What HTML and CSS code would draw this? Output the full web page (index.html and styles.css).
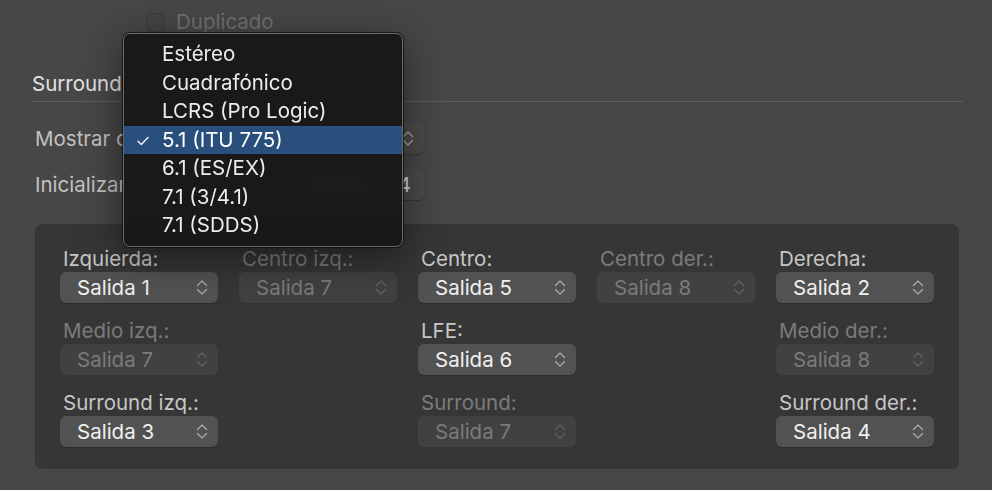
FILE: index.html
```html
<!DOCTYPE html>
<html lang="es">
<head>
<meta charset="utf-8">
<title>Surround</title>
<link rel="stylesheet" href="styles.css">
</head>
<body>
<div class="pane">
  <div class="dup">
    <span class="checkbox"></span>
    <span class="dup-label">Duplicado</span>
  </div>

  <div class="section-title">Surround</div>
  <div class="separator"></div>

  <div class="form-row first">
    <span class="form-label">Mostrar como:</span>
    <div class="popup wide">
      <span class="popup-text"></span>
      <svg class="chev" viewBox="0 0 12 19"><path d="M1.5 7.5 L6 3 L10.5 7.5 M1.5 11.5 L6 16 L10.5 11.5"/></svg>
    </div>
  </div>

  <div class="form-row second">
    <span class="form-label">Inicializar:</span>
    <div class="push wide">
      <span class="push-text">Salidas 1–4</span>
    </div>
  </div>

  <div class="box">
    <div class="grid">
      <div class="cell">
        <div class="lbl">Izquierda:</div>
        <div class="popup"><span class="popup-text">Salida 1</span><svg class="chev" viewBox="0 0 12 19"><path d="M1.5 7.5 L6 3 L10.5 7.5 M1.5 11.5 L6 16 L10.5 11.5"/></svg></div>
      </div>
      <div class="cell off">
        <div class="lbl">Centro izq.:</div>
        <div class="popup"><span class="popup-text">Salida 7</span><svg class="chev" viewBox="0 0 12 19"><path d="M1.5 7.5 L6 3 L10.5 7.5 M1.5 11.5 L6 16 L10.5 11.5"/></svg></div>
      </div>
      <div class="cell">
        <div class="lbl">Centro:</div>
        <div class="popup"><span class="popup-text">Salida 5</span><svg class="chev" viewBox="0 0 12 19"><path d="M1.5 7.5 L6 3 L10.5 7.5 M1.5 11.5 L6 16 L10.5 11.5"/></svg></div>
      </div>
      <div class="cell off">
        <div class="lbl">Centro der.:</div>
        <div class="popup"><span class="popup-text">Salida 8</span><svg class="chev" viewBox="0 0 12 19"><path d="M1.5 7.5 L6 3 L10.5 7.5 M1.5 11.5 L6 16 L10.5 11.5"/></svg></div>
      </div>
      <div class="cell">
        <div class="lbl">Derecha:</div>
        <div class="popup"><span class="popup-text">Salida 2</span><svg class="chev" viewBox="0 0 12 19"><path d="M1.5 7.5 L6 3 L10.5 7.5 M1.5 11.5 L6 16 L10.5 11.5"/></svg></div>
      </div>

      <div class="cell off">
        <div class="lbl">Medio izq.:</div>
        <div class="popup"><span class="popup-text">Salida 7</span><svg class="chev" viewBox="0 0 12 19"><path d="M1.5 7.5 L6 3 L10.5 7.5 M1.5 11.5 L6 16 L10.5 11.5"/></svg></div>
      </div>
      <div class="cell empty"></div>
      <div class="cell">
        <div class="lbl">LFE:</div>
        <div class="popup"><span class="popup-text">Salida 6</span><svg class="chev" viewBox="0 0 12 19"><path d="M1.5 7.5 L6 3 L10.5 7.5 M1.5 11.5 L6 16 L10.5 11.5"/></svg></div>
      </div>
      <div class="cell empty"></div>
      <div class="cell off">
        <div class="lbl">Medio der.:</div>
        <div class="popup"><span class="popup-text">Salida 8</span><svg class="chev" viewBox="0 0 12 19"><path d="M1.5 7.5 L6 3 L10.5 7.5 M1.5 11.5 L6 16 L10.5 11.5"/></svg></div>
      </div>

      <div class="cell">
        <div class="lbl">Surround izq.:</div>
        <div class="popup"><span class="popup-text">Salida 3</span><svg class="chev" viewBox="0 0 12 19"><path d="M1.5 7.5 L6 3 L10.5 7.5 M1.5 11.5 L6 16 L10.5 11.5"/></svg></div>
      </div>
      <div class="cell empty"></div>
      <div class="cell off">
        <div class="lbl">Surround:</div>
        <div class="popup"><span class="popup-text">Salida 7</span><svg class="chev" viewBox="0 0 12 19"><path d="M1.5 7.5 L6 3 L10.5 7.5 M1.5 11.5 L6 16 L10.5 11.5"/></svg></div>
      </div>
      <div class="cell empty"></div>
      <div class="cell">
        <div class="lbl">Surround der.:</div>
        <div class="popup"><span class="popup-text">Salida 4</span><svg class="chev" viewBox="0 0 12 19"><path d="M1.5 7.5 L6 3 L10.5 7.5 M1.5 11.5 L6 16 L10.5 11.5"/></svg></div>
      </div>
    </div>
  </div>

  <div class="menu">
    <div class="item">Estéreo</div>
    <div class="item">Cuadrafónico</div>
    <div class="item">LCRS (Pro Logic)</div>
    <div class="item selected">
      <svg class="check" viewBox="0 0 12 10"><path d="M1 5.2 L4.3 8.4 L11 1.4"/></svg>
      5.1 (ITU 775)
    </div>
    <div class="item">6.1 (ES/EX)</div>
    <div class="item">7.1 (3/4.1)</div>
    <div class="item">7.1 (SDDS)</div>
  </div>
</div>
</body>
</html>
```

FILE: styles.css
```css
html {
  background: #ffffff;
}

body {
  margin: 0;
  font-family: "Inter", "Liberation Sans", sans-serif;
  font-size: 20.5px;
  -webkit-font-smoothing: antialiased;
}

.pane {
  position: relative;
  width: 992px;
  height: 490px;
  background: #474747;
  overflow: hidden;
  box-sizing: border-box;
  padding-top: 12px;
}

/* Duplicado checkbox row */
.dup {
  display: flex;
  align-items: center;
  height: 20px;
  padding-left: 146px;
  gap: 11px;
}

.checkbox {
  width: 19px;
  height: 19px;
  border-radius: 5px;
  background: #444444;
  box-shadow: inset 0 0 0 1px #3c3c3c;
}

.dup-label {
  color: #707070;
  line-height: 20px;
}

/* Section heading */
.section-title {
  margin-top: 41px;
  padding-left: 32px;
  color: #e2e2e2;
  line-height: 22px;
}

.separator {
  margin: 6px 0 0 32px;
  width: 931px;
  height: 1px;
  background: #5d5d5d;
}

/* Form rows above the box */
.form-row {
  display: flex;
  align-items: center;
  padding-left: 35px;
}

.form-row.first {
  margin-top: 20px;
}

.form-row.second {
  margin-top: 15px;
}

.form-label {
  width: 88px;
  margin-right: 27px;
  color: #c2c2c2;
  white-space: nowrap;
  overflow: hidden;
}

.popup.wide {
  width: 274px;
  height: 32px;
  background: #4b4b4b;
}

.push.wide {
  width: 274px;
  height: 31px;
  border-radius: 6px;
  background: #4b4b4b;
  box-shadow: 0 1px 1px rgba(0, 0, 0, 0.25);
  display: flex;
  align-items: center;
  justify-content: flex-end;
  padding-right: 13px;
  box-sizing: border-box;
  color: #d8d8d8;
  white-space: nowrap;
  overflow: hidden;
}

/* Inner box with channel grid */
.box {
  margin: 24px 0 0 35px;
  width: 924px;
  height: 245px;
  box-sizing: border-box;
  background: #363636;
  border-radius: 7px;
  padding: 24px 25px 22px;
}

.grid {
  display: grid;
  grid-template-columns: repeat(5, 158px);
  column-gap: 21px;
  row-gap: 17px;
}

.lbl {
  line-height: 22px;
  padding-left: 3px;
  margin-bottom: 2px;
  color: #c6c6c6;
  white-space: nowrap;
}

.popup {
  display: flex;
  align-items: center;
  justify-content: space-between;
  height: 31px;
  border-radius: 6px;
  background: #525252;
  box-shadow: 0 1px 1px rgba(0, 0, 0, 0.22);
  padding: 0 10px 0 17px;
  box-sizing: border-box;
  color: #f0f0f0;
  white-space: nowrap;
}

.chev {
  width: 12px;
  height: 19px;
  flex: none;
}

.chev path {
  fill: none;
  stroke: #a9a9a9;
  stroke-width: 1.3;
  stroke-linecap: round;
  stroke-linejoin: round;
}

.cell.off .lbl {
  color: #7b7b7b;
}

.cell.off .popup {
  background: #414141;
  color: #7a7a7a;
  box-shadow: none;
}

.cell.off .chev path {
  stroke: #616161;
}

/* Dropdown menu */
.menu {
  position: absolute;
  left: 123px;
  top: 33px;
  width: 280px;
  box-sizing: border-box;
  padding: 6px 0;
  background: rgba(22, 22, 22, 0.93);
  -webkit-backdrop-filter: blur(6px);
  backdrop-filter: blur(6px);
  border: 1px solid #6c6c6c;
  border-radius: 7px;
  box-shadow: 0 0 0 1px rgba(0, 0, 0, 0.6), 0 10px 40px rgba(0, 0, 0, 0.5);
}

.item {
  position: relative;
  height: 28.5px;
  line-height: 28px;
  padding-left: 38px;
  color: #ececec;
  white-space: nowrap;
}

.item.selected {
  background: #29507c;
  color: #ffffff;
}

.check {
  position: absolute;
  left: 13px;
  top: 10px;
  width: 12px;
  height: 10px;
}

.check path {
  fill: none;
  stroke: #f2f2f2;
  stroke-width: 1.4;
  stroke-linecap: round;
  stroke-linejoin: round;
}
```
